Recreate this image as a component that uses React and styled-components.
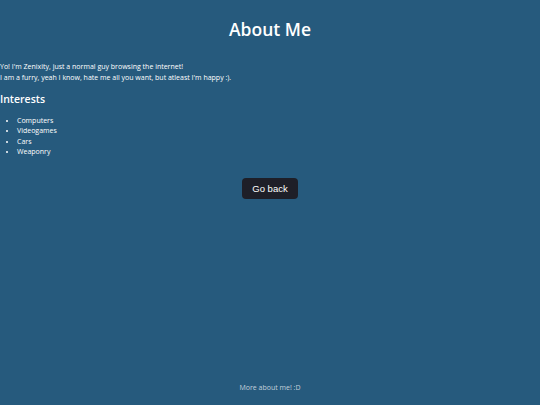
import React from "react";
import styled, { createGlobalStyle } from "styled-components";

const Global = createGlobalStyle`
  html, body { margin: 0; padding: 0; background: #265a7d; }
  body { font-family: "Open Sans", "DejaVu Sans", sans-serif; color: #ffffff; }
`;

const Page = styled.div`
  min-height: 405px;
  display: flex;
  flex-direction: column;
  box-sizing: border-box;
`;

const Title = styled.h1`
  margin: 16px 0 0;
  text-align: center;
  font-size: 17.5px;
  font-weight: 600;
  line-height: 26px;
`;

const Para = styled.p`
  margin: 20px 0 0;
  font-size: 7px;
  line-height: 10.5px;
`;

const SubTitle = styled.h2`
  margin: 9px 0 0;
  font-size: 10.5px;
  font-weight: 600;
  line-height: 14px;
`;

const List = styled.ul`
  margin: 10px 0 0;
  padding-left: 17px;
  font-size: 7px;
  line-height: 10.4px;
`;

const Item = styled.li``;

const ButtonRow = styled.div`
  display: flex;
  justify-content: center;
  margin-top: 20px;
`;

const Button = styled.button`
  background: #1e1f28;
  color: #ffffff;
  border: none;
  border-radius: 4px;
  font-family: "Liberation Sans", Arial, sans-serif;
  font-size: 9.5px;
  height: 21px;
  width: 56px;
  padding: 0;
`;

const Footer = styled.footer`
  margin-top: auto;
  padding-bottom: 13px;
  text-align: center;
  font-size: 7px;
  color: #c3d0dc;
`;

export default function App() {
  return (
    <Page>
      <Global />
      <Title>About Me</Title>
      <Para>
        Yo! I'm Zenixity, just a normal guy browsing the internet!
        <br />
        I am a furry, yeah I know, hate me all you want, but atleast I'm happy :).
      </Para>
      <SubTitle>Interests</SubTitle>
      <List>
        <Item>Computers</Item>
        <Item>Videogames</Item>
        <Item>Cars</Item>
        <Item>Weaponry</Item>
      </List>
      <ButtonRow>
        <Button>Go back</Button>
      </ButtonRow>
      <Footer>More about me! :D</Footer>
    </Page>
  );
}
